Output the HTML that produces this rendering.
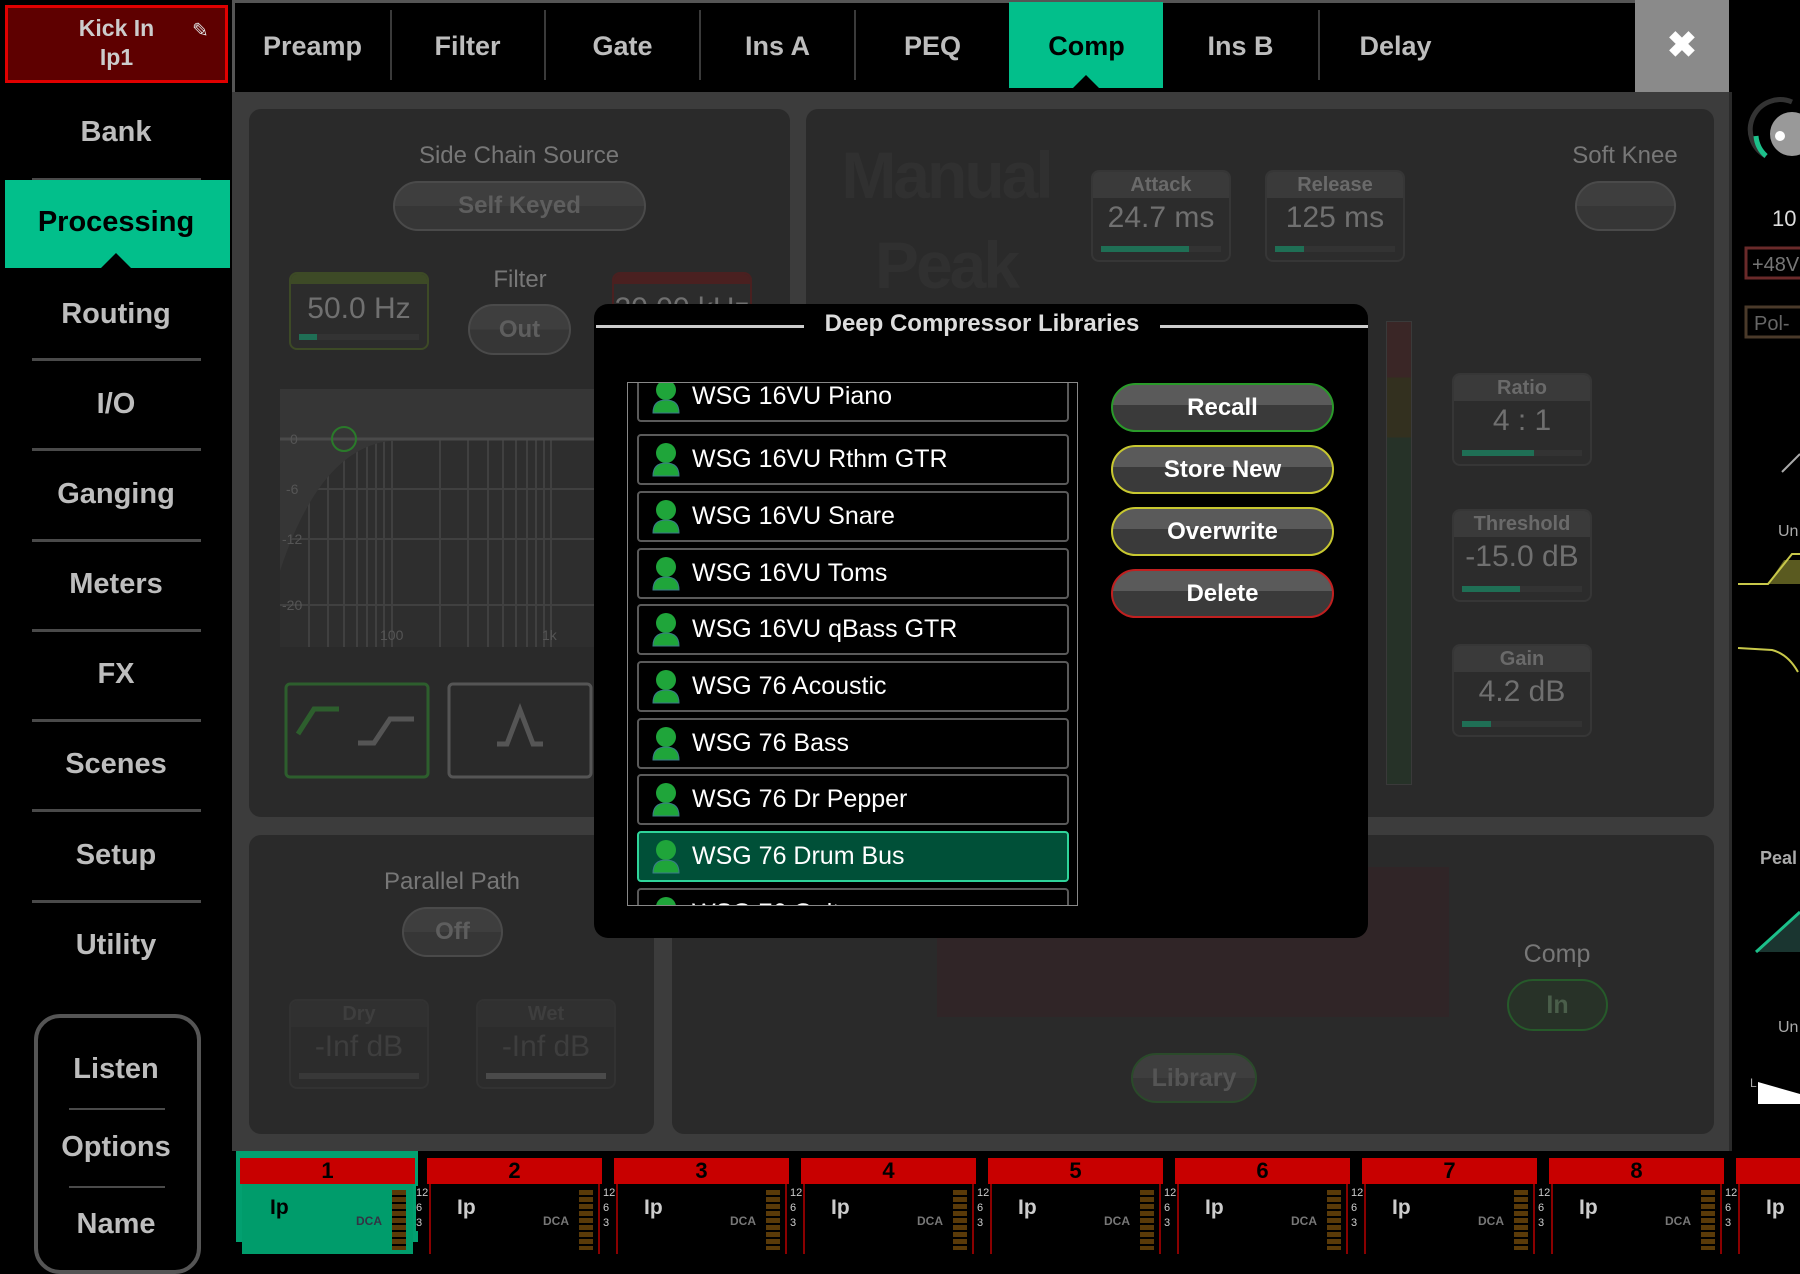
<!DOCTYPE html>
<html><head><meta charset="utf-8"><style>
*{margin:0;padding:0;box-sizing:border-box}
body{width:1800px;height:1242px;background:#000;position:relative;overflow:hidden;font-family:"Liberation Sans",sans-serif}
.a{position:absolute}
.c{text-align:center}
.nav{position:absolute;left:0;width:232px;text-align:center;color:#bdbdbd;font-weight:bold;font-size:29px}
.sep{position:absolute;left:32px;width:169px;height:3px;background:#4a4a4a}
.tab{position:absolute;top:0;height:92px;line-height:92px;width:155px;text-align:center;color:#bdbdbd;font-weight:bold;font-size:27px}
.tsep{position:absolute;top:10px;width:2px;height:70px;background:#3a3a3a}
.panel{position:absolute;background:#2a2a2a;border-radius:12px}
.lbl{position:absolute;color:#777;font-size:24px;text-align:center}
.pill{position:absolute;border-radius:26px;background:linear-gradient(#3e3e3e 50%,#363636 50%);border:2px solid #4a4a4a;color:#5e5e5e;font-weight:bold;font-size:24px;text-align:center}
.vbox{position:absolute;width:140px;border:2px solid #363636;border-radius:8px;background:#2c2c2c}
.vbox .h{height:26px;background:#3a3a3a;color:#6a6a6a;font-weight:bold;font-size:20px;text-align:center;line-height:26px;border-radius:6px 6px 0 0}
.vbox .v{color:#707070;font-size:30px;text-align:center;height:40px;line-height:40px}
.vbox .bar{position:absolute;left:8px;right:8px;bottom:8px;height:6px;background:#333}
.vbox .bar i{display:block;height:100%;background:#1f6f55}
.item{position:absolute;left:636px;width:432px;height:51px;border:2px solid #5a5a5a;border-radius:4px;background:#000;color:#fff;font-size:25px;line-height:47px;padding-left:53px}
.item svg{position:absolute;left:12px;top:6px}
.btn{position:absolute;left:1111px;width:223px;height:49px;border-radius:25px;background:linear-gradient(#5a5a5a 45%,#3a3a3a 45%);color:#fff;font-weight:bold;font-size:24px;text-align:center;line-height:45px}
.ch{position:absolute;top:1158px;width:175px;height:90px}
.ch .hd{position:absolute;left:0;top:0;width:175px;height:26px;background:#c80000;color:#000;font-weight:bold;font-size:22px;text-align:center;line-height:26px}
.ch .bd{position:absolute;top:26px;left:2px;width:171px;height:70px;background:#000;border-left:2px solid #8a0000;border-right:2px solid #8a0000}
.ch .ip{position:absolute;left:30px;top:38px;color:#ccc;font-weight:bold;font-size:21px}
.ch .dca{position:absolute;left:116px;top:56px;color:#777;font-weight:bold;font-size:12px}
.ch .m{position:absolute;left:152px;top:32px;width:14px;height:60px;background:repeating-linear-gradient(#5a3a08 0 5px,#000 5px 7px)}
.sc{position:absolute;top:1186px;color:#ccc;font-size:11px;line-height:15px;background:#000;width:10px;z-index:2}
</style></head><body>

<div class="a" style="left:5px;top:5px;width:223px;height:78px;background:#5e0000;border:3px solid #e00000"></div>
<div class="a c" style="left:5px;top:14px;width:223px;color:#ccc;font-weight:bold;font-size:23px;line-height:29px">Kick In<br>Ip1</div>
<div class="a" style="left:192px;top:18px;color:#ddd;font-size:20px">✎</div>
<div class="nav" style="top:116px">Bank</div>
<div class="sep" style="top:178px"></div>
<div class="a" style="left:5px;top:180px;width:225px;height:88px;background:#02bf8b"></div>
<div class="nav" style="top:206px;color:#000">Processing</div>
<div class="a" style="left:101px;top:253px;width:0;height:0;border-left:15px solid transparent;border-right:15px solid transparent;border-bottom:15px solid #000"></div>
<div class="nav" style="top:298px">Routing</div>
<div class="sep" style="top:358px"></div>
<div class="nav" style="top:388px">I/O</div>
<div class="sep" style="top:448px"></div>
<div class="nav" style="top:478px">Ganging</div>
<div class="sep" style="top:539px"></div>
<div class="nav" style="top:568px">Meters</div>
<div class="sep" style="top:629px"></div>
<div class="nav" style="top:658px">FX</div>
<div class="sep" style="top:719px"></div>
<div class="nav" style="top:748px">Scenes</div>
<div class="sep" style="top:809px"></div>
<div class="nav" style="top:839px">Setup</div>
<div class="sep" style="top:900px"></div>
<div class="nav" style="top:929px">Utility</div>
<div class="a" style="left:34px;top:1014px;width:167px;height:260px;border:4px solid #555;border-radius:26px"></div>
<div class="nav" style="top:1053px">Listen</div>
<div class="a" style="left:69px;top:1108px;width:96px;height:2px;background:#4a4a4a"></div>
<div class="nav" style="top:1131px">Options</div>
<div class="a" style="left:69px;top:1186px;width:96px;height:2px;background:#4a4a4a"></div>
<div class="nav" style="top:1208px">Name</div>

<div class="a" style="left:232px;top:0;width:1497px;height:3px;background:#555"></div>
<div class="a" style="left:232px;top:0;width:3px;height:92px;background:#555"></div>
<div class="tab" style="left:235px">Preamp</div>
<div class="tsep" style="left:390px"></div>
<div class="tab" style="left:390px">Filter</div>
<div class="tsep" style="left:544px"></div>
<div class="tab" style="left:545px">Gate</div>
<div class="tsep" style="left:699px"></div>
<div class="tab" style="left:700px">Ins A</div>
<div class="tsep" style="left:854px"></div>
<div class="tab" style="left:855px">PEQ</div>
<div class="a" style="left:1009px;top:2px;width:154px;height:86px;background:#02bf8b"></div>
<div class="tab" style="left:1009px;color:#000">Comp</div>
<div class="a" style="left:1072px;top:75px;width:0;height:0;border-left:14px solid transparent;border-right:14px solid transparent;border-bottom:14px solid #000"></div>
<div class="tab" style="left:1163px">Ins B</div>
<div class="tsep" style="left:1318px"></div>
<div class="tab" style="left:1318px">Delay</div>
<div class="a c" style="left:1635px;top:0;width:94px;height:92px;background:#8a8a8a;color:#fff;font-size:36px;line-height:90px;font-weight:bold">✖</div>

<div class="a" style="left:232px;top:92px;width:1497px;height:1059px;background:#3c3c3c"></div>
<div class="a" style="left:1729px;top:92px;width:3px;height:1059px;background:#2a2a2a"></div>

<div class="panel" style="left:249px;top:109px;width:541px;height:708px"></div>
<div class="panel" style="left:806px;top:109px;width:908px;height:708px"></div>
<div class="panel" style="left:249px;top:835px;width:405px;height:299px"></div>
<div class="panel" style="left:672px;top:835px;width:1042px;height:299px"></div>

<div class="lbl" style="left:349px;top:142px;width:340px">Side Chain Source</div>
<div class="pill" style="left:393px;top:181px;width:253px;height:50px;line-height:46px">Self Keyed</div>
<div class="vbox" style="left:289px;top:272px;height:78px;border-color:#3d4a26"><div class="h" style="height:10px;background:#3d4a26"></div><div class="v" style="height:54px;line-height:50px">50.0 Hz</div><div class="bar"><i style="width:15%"></i></div></div>
<div class="lbl" style="left:460px;top:266px;width:120px">Filter</div>
<div class="pill" style="left:468px;top:304px;width:103px;height:51px;line-height:47px">Out</div>
<div class="vbox" style="left:612px;top:272px;height:78px;border-color:#4a2020"><div class="h" style="height:10px;background:#4a2020"></div><div class="v" style="height:54px;line-height:50px">20.00 kHz</div></div>
<svg class="a" style="left:280px;top:389px" width="320" height="258">
<rect width="320" height="258" fill="#2e2e2e"/>
<g stroke="#404040" stroke-width="2">
<line x1="29" y1="0" x2="29" y2="258"/><line x1="48" y1="0" x2="48" y2="258"/><line x1="64" y1="0" x2="64" y2="258"/><line x1="77" y1="0" x2="77" y2="258"/><line x1="87" y1="0" x2="87" y2="258"/><line x1="96" y1="0" x2="96" y2="258"/><line x1="104" y1="0" x2="104" y2="258"/><line x1="112" y1="0" x2="112" y2="258"/><line x1="160" y1="0" x2="160" y2="258"/><line x1="188" y1="0" x2="188" y2="258"/><line x1="208" y1="0" x2="208" y2="258"/><line x1="223" y1="0" x2="223" y2="258"/><line x1="236" y1="0" x2="236" y2="258"/><line x1="247" y1="0" x2="247" y2="258"/><line x1="256" y1="0" x2="256" y2="258"/><line x1="264" y1="0" x2="264" y2="258"/><line x1="271" y1="0" x2="271" y2="258"/>
<line x1="0" y1="50" x2="320" y2="50"/><line x1="0" y1="100" x2="320" y2="100"/><line x1="0" y1="150" x2="320" y2="150"/><line x1="0" y1="216" x2="320" y2="216"/>
</g>
<path d="M0 182 Q40 60 110 52 L320 50 L320 0 L0 0Z" fill="#363636"/>
<line x1="0" y1="50" x2="320" y2="50" stroke="#4a4a4a" stroke-width="3"/>
<circle cx="64" cy="50" r="12" fill="none" stroke="#2a7a2a" stroke-width="2"/>
<g fill="#555" font-size="14" font-family="Liberation Sans"><text x="10" y="55">0</text><text x="6" y="105">-6</text><text x="2" y="155">-12</text><text x="2" y="221">-20</text><text x="100" y="251">100</text><text x="262" y="251">1k</text></g>
</svg>
<svg class="a" style="left:284px;top:682px" width="146" height="97"><rect x="2" y="2" width="142" height="93" rx="4" fill="none" stroke="#2d5e2d" stroke-width="3"/><path d="M14 52 L30 27 L55 27" fill="none" stroke="#2d5e2d" stroke-width="5"/><path d="M74 61 L90 61 L106 37 L130 37" fill="none" stroke="#555" stroke-width="5"/></svg>
<svg class="a" style="left:447px;top:682px" width="146" height="97"><rect x="2" y="2" width="142" height="93" rx="4" fill="none" stroke="#555" stroke-width="3"/><path d="M50 62 L60 62 L73 28 L86 62 L96 62" fill="none" stroke="#555" stroke-width="5"/></svg>

<div class="a" style="left:828px;top:130px;color:#303030;font-weight:bold;font-size:66px;line-height:90px;text-align:center;width:236px;letter-spacing:-3px">Manual<br>Peak</div>
<div class="vbox" style="left:1091px;top:170px;height:92px"><div class="h">Attack</div><div class="v">24.7 ms</div><div class="bar"><i style="width:73%"></i></div></div>
<div class="vbox" style="left:1265px;top:170px;height:92px"><div class="h">Release</div><div class="v">125 ms</div><div class="bar"><i style="width:24%"></i></div></div>
<div class="lbl" style="left:1560px;top:142px;width:130px">Soft Knee</div>
<div class="pill" style="left:1575px;top:181px;width:101px;height:50px"></div>
<div class="a" style="left:1386px;top:321px;width:26px;height:464px;background:linear-gradient(#3a2626 0,#3a2626 12%,#33301f 12%,#33301f 25%,#263228 25%);border:1px solid #3a3a3a"></div>
<div class="vbox" style="left:1452px;top:373px;height:93px"><div class="h">Ratio</div><div class="v">4 : 1</div><div class="bar"><i style="width:60%"></i></div></div>
<div class="vbox" style="left:1452px;top:509px;height:93px"><div class="h">Threshold</div><div class="v">-15.0 dB</div><div class="bar"><i style="width:48%"></i></div></div>
<div class="vbox" style="left:1452px;top:644px;height:93px"><div class="h">Gain</div><div class="v">4.2 dB</div><div class="bar"><i style="width:24%"></i></div></div>

<div class="lbl" style="left:352px;top:868px;width:200px">Parallel Path</div>
<div class="pill" style="left:402px;top:907px;width:101px;height:50px;line-height:46px">Off</div>
<div class="vbox" style="left:289px;top:999px;height:90px;border-color:#323232"><div class="h" style="background:#303030;color:#3e3e3e">Dry</div><div class="v" style="color:#3e3e3e">-Inf dB</div><div class="bar" style="background:#383838"></div></div>
<div class="vbox" style="left:476px;top:999px;height:90px;border-color:#323232"><div class="h" style="background:#303030;color:#3e3e3e">Wet</div><div class="v" style="color:#3e3e3e">-Inf dB</div><div class="bar" style="background:#4a4a4a"></div></div>

<div class="a" style="left:937px;top:867px;width:512px;height:150px;background:#302527"></div>
<div class="lbl" style="left:1497px;top:940px;width:120px;font-size:25px">Comp</div>
<div class="pill" style="left:1507px;top:979px;width:101px;height:52px;line-height:48px;border-color:#265a2a;background:#283228;color:#4a5e4a;font-size:25px">In</div>
<div class="pill" style="left:1131px;top:1053px;width:126px;height:50px;line-height:46px;border-color:#2a4a2a;color:#555;font-size:25px">Library</div>

<svg class="a" style="left:1732px;top:92px" width="68" height="1059">
<path d="M34 64 A30 30 0 0 1 60 10" fill="none" stroke="#333" stroke-width="5"/>
<path d="M24 44 A30 30 0 0 0 34 64" fill="none" stroke="#1cc08a" stroke-width="5"/>
<circle cx="60" cy="42" r="22" fill="#999"/><circle cx="48" cy="44" r="5" fill="#fff"/>
<text x="40" y="134" fill="#ddd" font-size="22" font-family="Liberation Sans">10</text>
<rect x="14" y="156" width="60" height="30" fill="none" stroke="#6a2a2a" stroke-width="3"/><text x="20" y="179" fill="#777" font-size="20" font-family="Liberation Sans">+48V</text>
<rect x="14" y="215" width="60" height="30" fill="none" stroke="#4a3a2a" stroke-width="3"/><text x="22" y="238" fill="#666" font-size="20" font-family="Liberation Sans">Pol-</text>
<path d="M50 380 L68 362" stroke="#aaa" stroke-width="2"/>
<text x="46" y="444" fill="#aaa" font-size="16" font-family="Liberation Sans">Un</text>
<path d="M6 492 L68 492 L68 468 L52 468 L36 492Z" fill="#5a5a20"/><path d="M6 492 L36 492 L60 462 L68 462" fill="none" stroke="#c8c84a" stroke-width="2"/>
<path d="M6 556 L40 558 Q56 562 66 580" fill="none" stroke="#c8c84a" stroke-width="2"/>
<text x="28" y="772" fill="#aaa" font-size="18" font-weight="bold" font-family="Liberation Sans">Peal</text>
<path d="M24 860 L68 820 L68 860Z" fill="#1a3530"/><path d="M24 860 L68 820" stroke="#1cc08a" stroke-width="3"/>
<text x="46" y="940" fill="#aaa" font-size="16" font-family="Liberation Sans">Un</text>
<text x="18" y="995" fill="#aaa" font-size="12" font-family="Liberation Sans">L</text>
<path d="M26 1012 L26 990 L68 1002 L68 1012Z" fill="#fff"/>
</svg>

<div class="a" style="left:232px;top:1151px;width:1568px;height:91px;background:#000"></div>
<div class="a" style="left:236px;top:1151px;width:182px;height:91px;background:#02a070"></div>
<div class="ch" style="left:240px"><div class="hd">1</div><div class="bd" style="background:#009c6b;border-color:#009c6b"></div><div class="ip" style="color:#000">Ip</div><div class="dca" style="color:#334">DCA</div><div class="m"></div></div>
<div class="ch" style="left:427px"><div class="hd">2</div><div class="bd"></div><div class="ip">Ip</div><div class="dca">DCA</div><div class="m"></div></div>
<div class="ch" style="left:614px"><div class="hd">3</div><div class="bd"></div><div class="ip">Ip</div><div class="dca">DCA</div><div class="m"></div></div>
<div class="ch" style="left:801px"><div class="hd">4</div><div class="bd"></div><div class="ip">Ip</div><div class="dca">DCA</div><div class="m"></div></div>
<div class="ch" style="left:988px"><div class="hd">5</div><div class="bd"></div><div class="ip">Ip</div><div class="dca">DCA</div><div class="m"></div></div>
<div class="ch" style="left:1175px"><div class="hd">6</div><div class="bd"></div><div class="ip">Ip</div><div class="dca">DCA</div><div class="m"></div></div>
<div class="ch" style="left:1362px"><div class="hd">7</div><div class="bd"></div><div class="ip">Ip</div><div class="dca">DCA</div><div class="m"></div></div>
<div class="ch" style="left:1549px"><div class="hd">8</div><div class="bd"></div><div class="ip">Ip</div><div class="dca">DCA</div><div class="m"></div></div>
<div class="ch" style="left:1736px"><div class="hd"></div><div class="bd"></div><div class="ip">Ip</div></div>
<div class="sc" style="left:416px">12<br>6<br>3</div>
<div class="sc" style="left:603px">12<br>6<br>3</div>
<div class="sc" style="left:790px">12<br>6<br>3</div>
<div class="sc" style="left:977px">12<br>6<br>3</div>
<div class="sc" style="left:1164px">12<br>6<br>3</div>
<div class="sc" style="left:1351px">12<br>6<br>3</div>
<div class="sc" style="left:1538px">12<br>6<br>3</div>
<div class="sc" style="left:1725px">12<br>6<br>3</div>

<div class="a" style="left:594px;top:304px;width:774px;height:634px;background:#000;border-radius:14px"></div>
<div class="a" style="left:596px;top:325px;width:208px;height:3px;background:#ccc"></div>
<div class="a" style="left:1160px;top:325px;width:208px;height:3px;background:#ccc"></div>
<div class="a c" style="left:804px;top:310px;width:356px;color:#ddd;font-weight:bold;font-size:24px">Deep Compressor Libraries</div>
<div class="a" style="left:627px;top:382px;width:451px;height:524px;border:1px solid #888;overflow:hidden">
<div style="position:absolute;left:-627px;top:-382px;width:1800px;height:1242px">
<div class="item" style="top:370px"><svg width="30" height="36" viewBox="0 0 30 36"><circle cx="15" cy="11" r="10" fill="#1fa53a"/><path d="M2 34 Q2 21 15 21 Q28 21 28 34Z" fill="#1fa53a" stroke="#3a7a8a" stroke-width="1"/></svg>WSG 16VU Piano</div>
<div class="item" style="top:433px"><svg width="30" height="36" viewBox="0 0 30 36"><circle cx="15" cy="11" r="10" fill="#1fa53a"/><path d="M2 34 Q2 21 15 21 Q28 21 28 34Z" fill="#1fa53a" stroke="#3a7a8a" stroke-width="1"/></svg>WSG 16VU Rthm GTR</div>
<div class="item" style="top:490px"><svg width="30" height="36" viewBox="0 0 30 36"><circle cx="15" cy="11" r="10" fill="#1fa53a"/><path d="M2 34 Q2 21 15 21 Q28 21 28 34Z" fill="#1fa53a" stroke="#3a7a8a" stroke-width="1"/></svg>WSG 16VU Snare</div>
<div class="item" style="top:547px"><svg width="30" height="36" viewBox="0 0 30 36"><circle cx="15" cy="11" r="10" fill="#1fa53a"/><path d="M2 34 Q2 21 15 21 Q28 21 28 34Z" fill="#1fa53a" stroke="#3a7a8a" stroke-width="1"/></svg>WSG 16VU Toms</div>
<div class="item" style="top:603px"><svg width="30" height="36" viewBox="0 0 30 36"><circle cx="15" cy="11" r="10" fill="#1fa53a"/><path d="M2 34 Q2 21 15 21 Q28 21 28 34Z" fill="#1fa53a" stroke="#3a7a8a" stroke-width="1"/></svg>WSG 16VU qBass GTR</div>
<div class="item" style="top:660px"><svg width="30" height="36" viewBox="0 0 30 36"><circle cx="15" cy="11" r="10" fill="#1fa53a"/><path d="M2 34 Q2 21 15 21 Q28 21 28 34Z" fill="#1fa53a" stroke="#3a7a8a" stroke-width="1"/></svg>WSG 76 Acoustic</div>
<div class="item" style="top:717px"><svg width="30" height="36" viewBox="0 0 30 36"><circle cx="15" cy="11" r="10" fill="#1fa53a"/><path d="M2 34 Q2 21 15 21 Q28 21 28 34Z" fill="#1fa53a" stroke="#3a7a8a" stroke-width="1"/></svg>WSG 76 Bass</div>
<div class="item" style="top:773px"><svg width="30" height="36" viewBox="0 0 30 36"><circle cx="15" cy="11" r="10" fill="#1fa53a"/><path d="M2 34 Q2 21 15 21 Q28 21 28 34Z" fill="#1fa53a" stroke="#3a7a8a" stroke-width="1"/></svg>WSG 76 Dr Pepper</div>
<div class="item" style="top:830px;background:#005038;border-color:#2fd49a"><svg width="30" height="36" viewBox="0 0 30 36"><circle cx="15" cy="11" r="10" fill="#1fa53a"/><path d="M2 34 Q2 21 15 21 Q28 21 28 34Z" fill="#1fa53a" stroke="#3a7a8a" stroke-width="1"/></svg>WSG 76 Drum Bus</div>
<div class="item" style="top:887px"><svg width="30" height="36" viewBox="0 0 30 36"><circle cx="15" cy="11" r="10" fill="#1fa53a"/><path d="M2 34 Q2 21 15 21 Q28 21 28 34Z" fill="#1fa53a" stroke="#3a7a8a" stroke-width="1"/></svg>WSG 76 Guitar</div>
</div></div>
<div class="btn" style="top:383px;border:2px solid #2a9a2a">Recall</div>
<div class="btn" style="top:445px;border:2px solid #c8c830">Store New</div>
<div class="btn" style="top:507px;border:2px solid #c8c830">Overwrite</div>
<div class="btn" style="top:569px;border:2px solid #c02020">Delete</div>
</body></html>
